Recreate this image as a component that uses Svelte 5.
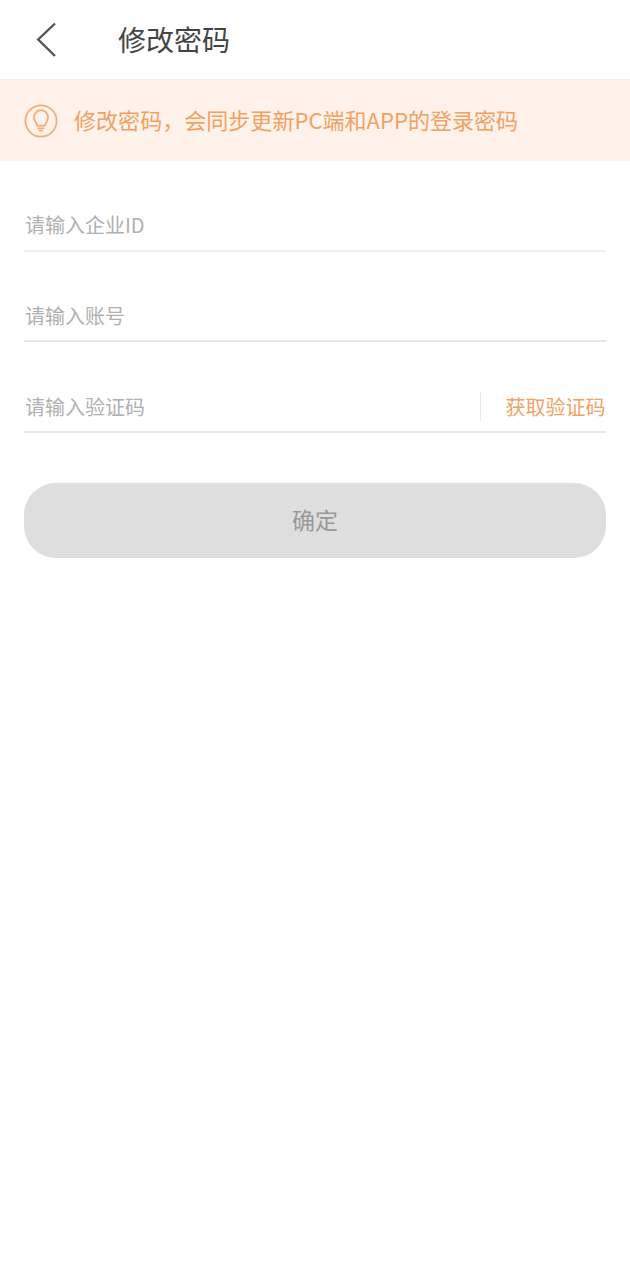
<script>
  const fields = [
    { label: '请输入企业ID', cls: 'first' },
    { label: '请输入账号', cls: 'second' }
  ];
</script>

<div class="page">
  <header class="nav">
    <button class="back" aria-label="返回">
      <svg width="22" height="36" viewBox="0 0 22 36" fill="none" stroke="#555" stroke-width="2.4">
        <path d="M20 1.5 L3.2 17.5 L20 34" />
      </svg>
    </button>
    <h1>修改密码</h1>
  </header>

  <div class="notice">
    <svg class="bulb" width="34" height="34" viewBox="0 0 34 34" fill="none" stroke="#f6ae78" stroke-width="1.8">
      <circle cx="17" cy="17" r="15.6" />
      <path d="M13.2 21.6 C13 19 10 17.6 10 13.2 A7 7 0 0 1 24 13.2 C24 17.6 21 19 20.8 21.6 Z" />
      <path d="M13.6 24.4 H20.4 M15 26.6 H19" />
    </svg>
    <span class="msg">修改密码，会同步更新PC端和APP的登录密码</span>
  </div>

  <form class="form">
    {#each fields as f}
      <div class="field {f.cls}"><span class="ph">{f.label}</span></div>
    {/each}
    <div class="field code">
      <span class="ph">请输入验证码</span>
      <span class="get">获取验证码</span>
    </div>
    <button class="submit" type="button">确定</button>
  </form>
</div>

<style>
  :global(body) {
    margin: 0;
    background: #fff;
  }
  .page {
    width: 630px;
    height: 1280px;
    background: #fff;
    font-family: "Noto Sans CJK SC", "Noto Sans", sans-serif;
    overflow: hidden;
  }
  .nav {
    height: 79px;
    display: flex;
    align-items: center;
    border-bottom: 1px solid #f7efe9;
  }
  .back {
    width: 118px;
    height: 79px;
    padding: 0 0 0 35px;
    border: 0;
    background: none;
    display: flex;
    align-items: center;
  }
  h1 {
    margin: 0;
    font-size: 28px;
    font-weight: 400;
    color: #444;
    line-height: 79px;
  }
  .notice {
    height: 81px;
    background: #fff2ea;
    display: flex;
    align-items: center;
    padding-left: 24px;
    gap: 16px;
    font-size: 22.05px;
    color: #f2a164;
  }
  .msg {
    padding-bottom: 4px;
  }
  .bulb {
    flex: none;
  }
  .form {
    padding: 0 24px;
  }
  .field {
    height: 91px;
    display: flex;
    align-items: flex-end;
    justify-content: space-between;
    border-bottom: 2px solid #e6e6e6;
    box-sizing: border-box;
    padding-bottom: 9px;
    font-size: 20px;
    line-height: 30px;
  }
  .field.first {
    padding-bottom: 10px;
    border-bottom-color: #f0f0f0;
  }
  .field.second {
    height: 90px;
  }
  .ph {
    margin-left: 1px;
    color: #b0b0b0;
  }
  .get {
    color: #f0a264;
    width: 126px;
    box-sizing: border-box;
    padding-left: 25.5px;
    position: relative;
  }
  .get::before {
    content: "";
    position: absolute;
    left: 0;
    top: 0;
    height: 29px;
    width: 1px;
    background: #e8e8e8;
  }
  .submit {
    display: block;
    width: 100%;
    height: 75px;
    margin-top: 50px;
    padding: 0 0 4px;
    border: 0;
    border-radius: 32px;
    background: #dedede;
    color: #999;
    font-family: inherit;
    font-size: 23px;
  }
</style>
